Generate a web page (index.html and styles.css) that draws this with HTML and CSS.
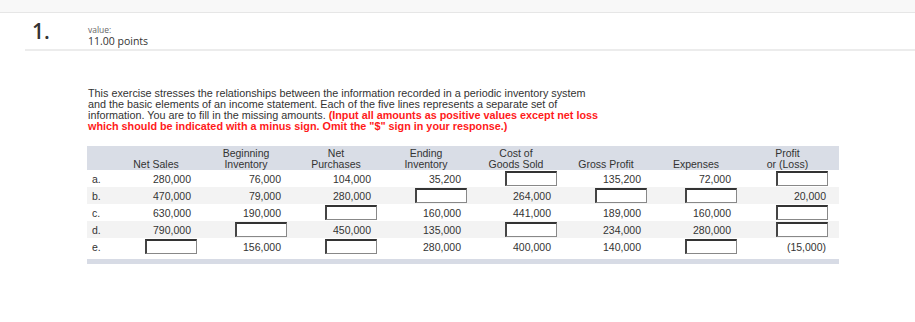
FILE: index.html
```html
<!DOCTYPE html>
<html>
<head>
<meta charset="utf-8">
<link rel="stylesheet" href="styles.css">
</head>
<body>
<div class="topbar"></div>
<div class="qhead">
  <div class="qnum">1.</div>
  <div class="qmeta">
    <div class="vlabel">value:</div>
    <div class="points">11.00 points</div>
  </div>
</div>
<div class="qbody">
  <p class="intro">This exercise stresses the relationships between the information recorded in a periodic inventory system<br>and the basic elements of an income statement. Each of the five lines represents a separate set of<br>information. You are to fill in the missing amounts. <span class="warn">(Input all amounts as positive values except net loss<br>which should be indicated with a minus sign. Omit the "$" sign in your response.)</span></p>
  <table class="grid">
    <colgroup>
      <col class="c-lbl"><col class="c-n"><col class="c-n"><col class="c-n"><col class="c-n"><col class="c-n"><col class="c-n"><col class="c-n"><col class="c-last">
    </colgroup>
    <thead>
      <tr>
        <th></th>
        <th>Net Sales</th>
        <th>Beginning<br>Inventory</th>
        <th>Net<br>Purchases</th>
        <th>Ending<br>Inventory</th>
        <th>Cost of<br>Goods Sold</th>
        <th>Gross Profit</th>
        <th>Expenses</th>
        <th>Profit<br>or (Loss)</th>
      </tr>
    </thead>
    <tbody>
      <tr>
        <td class="lbl">a.</td>
        <td>280,000</td><td>76,000</td><td>104,000</td><td>35,200</td>
        <td class="in"><span class="box"></span></td>
        <td>135,200</td><td>72,000</td>
        <td class="in"><span class="box"></span></td>
      </tr>
      <tr class="alt">
        <td class="lbl">b.</td>
        <td>470,000</td><td>79,000</td><td>280,000</td>
        <td class="in"><span class="box"></span></td>
        <td>264,000</td>
        <td class="in"><span class="box"></span></td>
        <td class="in"><span class="box"></span></td>
        <td>20,000</td>
      </tr>
      <tr>
        <td class="lbl">c.</td>
        <td>630,000</td><td>190,000</td>
        <td class="in"><span class="box"></span></td>
        <td>160,000</td><td>441,000</td><td>189,000</td><td>160,000</td>
        <td class="in"><span class="box"></span></td>
      </tr>
      <tr class="alt">
        <td class="lbl">d.</td>
        <td>790,000</td>
        <td class="in"><span class="box"></span></td>
        <td>450,000</td><td>135,000</td>
        <td class="in"><span class="box"></span></td>
        <td>234,000</td><td>280,000</td>
        <td class="in"><span class="box"></span></td>
      </tr>
      <tr>
        <td class="lbl">e.</td>
        <td class="in"><span class="box"></span></td>
        <td>156,000</td>
        <td class="in"><span class="box"></span></td>
        <td>280,000</td><td>400,000</td><td>140,000</td>
        <td class="in"><span class="box"></span></td>
        <td>(15,000)</td>
      </tr>
    </tbody>
  </table>
  <div class="tbar"></div>
</div>
</body>
</html>
```

FILE: styles.css
```css
html, body {
  margin: 0;
  padding: 0;
  background: #fff;
}
body {
  font-family: "Liberation Sans", Arial, sans-serif;
  color: #333;
}
.topbar {
  height: 12px;
  background: #f8f8f8;
  border-bottom: 1px solid #e6e6e6;
}
.qhead {
  margin-left: 25px;
  height: 36px;
  border-bottom: 2px solid #ececec;
  display: flex;
  align-items: flex-start;
}
.qnum {
  font-family: "Open Sans", sans-serif;
  font-size: 21px;
  font-weight: 600;
  line-height: 21px;
  color: #333;
  width: 63px;
  padding-left: 7px;
  box-sizing: border-box;
  margin-top: 8px;
}
.qmeta {
  font-family: "Open Sans", sans-serif;
  margin-top: 11px;
}
.vlabel {
  font-size: 8.5px;
  line-height: 11px;
  color: #666;
}
.points {
  font-size: 10.5px;
  line-height: 12px;
  color: #333;
}
.qbody {
  padding-left: 87px;
}
.intro {
  margin: 37px 0 0 1px;
  white-space: nowrap;
  font-size: 10.8px;
  line-height: 11px;
  color: #333;
}
.warn {
  color: #ff1a1a;
  font-weight: bold;
}
.grid {
  margin-top: 14px;
  border-collapse: collapse;
  table-layout: fixed;
  width: 752px;
  font-size: 10.5px;
  color: #333;
}
.c-lbl { width: 29px; }
.c-n { width: 90px; }
.c-last { width: 93px; }
.grid th {
  background: #d9dde6;
  font-weight: normal;
  text-align: center;
  vertical-align: bottom;
  line-height: 10.5px;
  height: 23px;
  padding: 0 10px 1px 0;
}
.grid td {
  height: 17px;
  padding: 0 15px 0 0;
  text-align: right;
  vertical-align: middle;
  line-height: 12px;
}
.grid td:last-child {
  padding-right: 13px;
}
.grid td.lbl {
  text-align: left;
  padding: 0 0 0 5px;
}
.grid td.in {
  padding-right: 9px;
}
.grid td.in:last-child {
  padding-right: 11px;
}
.grid tr.alt td {
  background: #f3f3f3;
}
.box {
  display: inline-block;
  vertical-align: middle;
  width: 52px;
  height: 15px;
  box-sizing: border-box;
  background: #fff;
  border: 1px solid #888;
  border-top: 2px solid #333;
  border-left: 2px solid #444;
}
.tbar {
  margin-top: 4px;
  width: 752px;
  height: 5px;
  background: #d7dbe5;
}
```
